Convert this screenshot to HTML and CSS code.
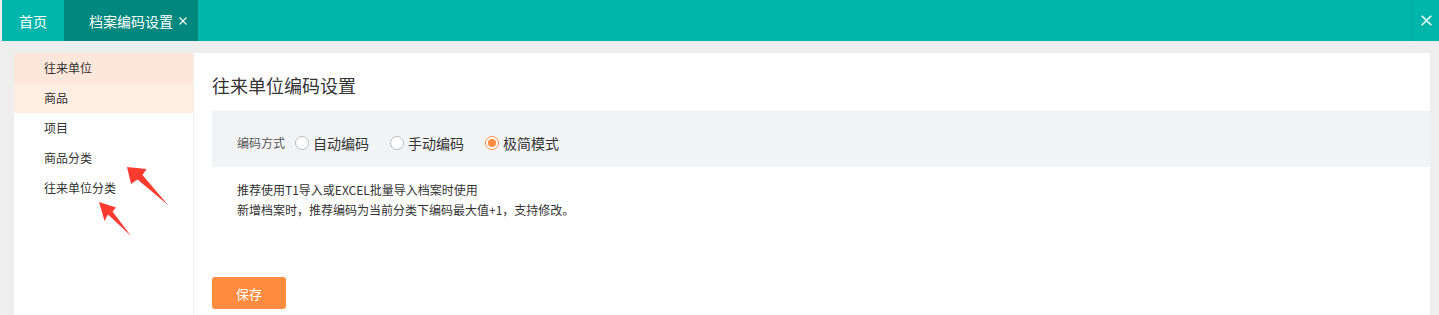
FILE: index.html
```html
<!DOCTYPE html>
<html lang="zh-CN">
<head>
<meta charset="utf-8">
<title>档案编码设置</title>
<link rel="stylesheet" href="styles.css">
</head>
<body>
<header class="topbar">
  <div class="tab">首页</div>
  <div class="tab tab-active">档案编码设置
    <svg class="tab-close" width="8" height="8" viewBox="0 0 8 8"><path d="M0.5 0.5L7.5 7.5M7.5 0.5L0.5 7.5" stroke="#fff" stroke-width="1.1"/></svg>
  </div>
  <div class="spacer"></div>
  <div class="close-all">
    <svg width="11" height="11" viewBox="0 0 11 11"><path d="M0.7 0.7L10.3 10.3M10.3 0.7L0.7 10.3" stroke="#fff" stroke-width="1.5"/></svg>
  </div>
</header>
<div class="workspace">
  <aside class="sidebar">
    <div class="side-item side-active">往来单位</div>
    <div class="side-item side-hover">商品</div>
    <div class="side-item">项目</div>
    <div class="side-item">商品分类</div>
    <div class="side-item">往来单位分类</div>
  </aside>
  <main class="panel">
    <h1 class="title">往来单位编码设置</h1>
    <div class="band">
      <span class="band-label">编码方式</span>
      <label class="option"><span class="radio"></span>自动编码</label>
      <label class="option"><span class="radio"></span>手动编码</label>
      <label class="option"><span class="radio radio-checked"></span>极简模式</label>
    </div>
    <div class="notes">
      <div>推荐使用T1导入或EXCEL批量导入档案时使用</div>
      <div>新增档案时，推荐编码为当前分类下编码最大值+1，支持修改。</div>
    </div>
    <button class="save">保存</button>
  </main>
</div>
<svg class="arrows" width="200" height="260" viewBox="0 0 200 260">
  <polygon points="127,167 146.5,169 142.5,175 168,205 137.5,179.5 131,184" fill="#ff3b30"/>
  <polygon points="99,202 116,207.5 112.5,211.5 131,236 108,214.5 104.5,221" fill="#ff3b30"/>
</svg>
</body>
</html>
```
FILE: styles.css
```css
html, body {
  margin: 0;
  height: 100%;
}
body {
  background: #eeeeee;
  padding-left: 2px;
  box-sizing: border-box;
  font-family: "Noto Sans CJK SC", "Microsoft YaHei", sans-serif;
  color: #333;
  overflow: hidden;
  position: relative;
}
.topbar {
  display: flex;
  height: 41px;
  background: #00b6aa;
}
.tab {
  display: flex;
  align-items: center;
  justify-content: center;
  width: 62px;
  color: #fff;
  font-size: 14px;
}
.tab-active {
  width: auto;
  background: #00887f;
  padding: 0 11px 0 25px;
  justify-content: flex-start;
}
.tab-close {
  margin-left: 6px;
  margin-top: 1px;
}
.spacer {
  flex: 1;
}
.close-all {
  width: 26px;
  border-left: 1px solid #00a89d;
  display: flex;
  align-items: center;
  justify-content: center;
}
.workspace {
  display: flex;
  gap: 1px;
  padding: 12px 9px 0 12px;
  height: calc(100% - 41px);
  box-sizing: border-box;
}
.sidebar {
  width: 179px;
  background: #fff;
}
.side-item {
  height: 30px;
  line-height: 30px;
  padding-left: 30px;
  font-size: 12px;
  color: #333;
}
.side-active {
  background: #fde6da;
}
.side-hover {
  background: #feede3;
}
.panel {
  flex: 1;
  background: #fff;
  padding: 20px 0 0 18px;
}
.title {
  margin: 0 0 14px;
  font-size: 18px;
  line-height: 24px;
  font-weight: normal;
  color: #333;
}
.band {
  height: 56px;
  box-sizing: border-box;
  padding: 7px 0 0 25px;
  background: #f2f3f5;
  display: flex;
  align-items: center;
}
.band-label {
  font-size: 12px;
  color: #555;
  margin-right: 10px;
}
.option {
  display: flex;
  align-items: center;
  font-size: 14px;
  color: #333;
  margin-right: 21px;
}
.radio {
  width: 14px;
  height: 14px;
  box-sizing: border-box;
  border: 1px solid #b9bcc2;
  border-radius: 50%;
  background: #fff;
  margin-right: 4px;
  display: flex;
  align-items: center;
  justify-content: center;
}
.radio-checked {
  border: 1.5px solid #ff8c40;
}
.radio-checked::after {
  content: "";
  width: 8px;
  height: 8px;
  border-radius: 50%;
  background: #ff8c40;
}
.notes {
  margin-top: 13px;
  padding-left: 25px;
  font-size: 12px;
  line-height: 20px;
  color: #333;
}
.save {
  display: block;
  margin-top: 57px;
  width: 74px;
  height: 32px;
  border: none;
  border-radius: 3px;
  background: #ff8c40;
  color: #fff;
  font-family: inherit;
  font-size: 13px;
  padding: 0;
}
.arrows {
  position: absolute;
  left: 0;
  top: 0;
}
```
